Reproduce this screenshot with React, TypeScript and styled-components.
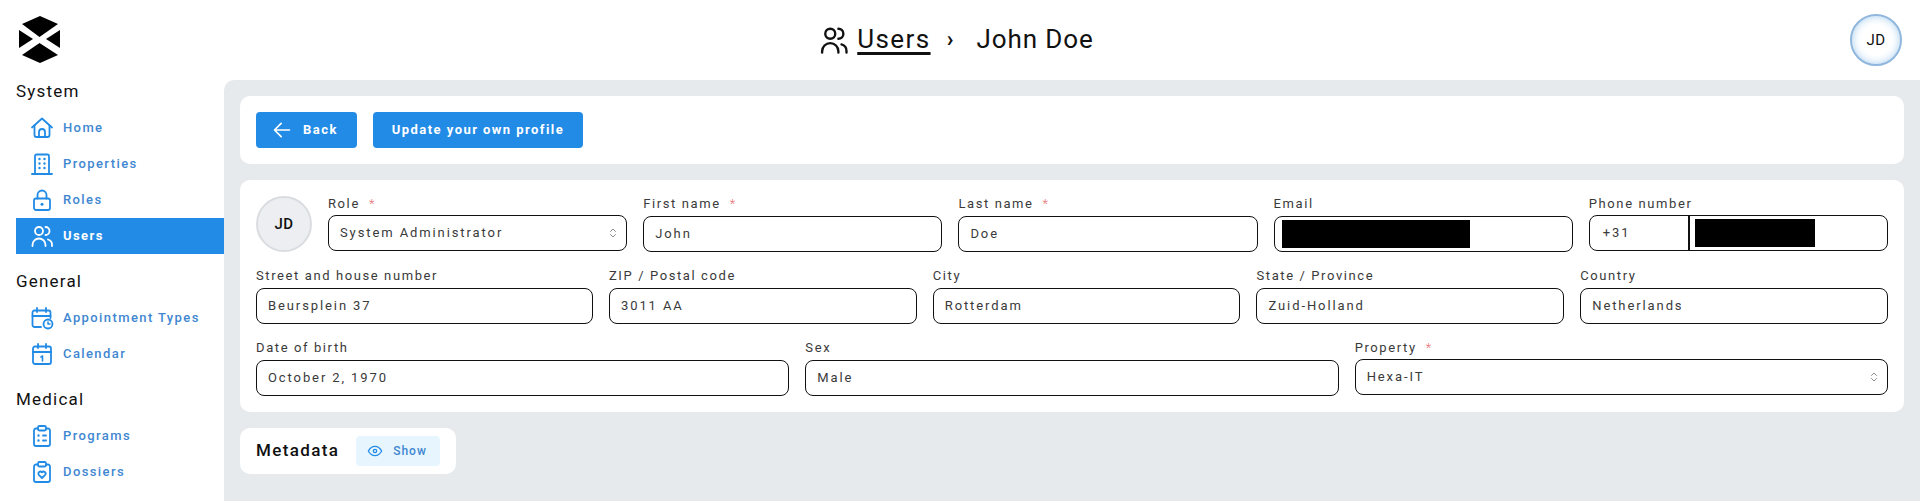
import React from "react";
import styled, { createGlobalStyle } from "styled-components";

const GlobalStyle = createGlobalStyle`
  html, body {
    margin: 0;
    height: 100%;
    background: #fff;
    overflow: hidden;
  }
  body {
    font-family: "Roboto", "Liberation Sans", sans-serif;
    color: #111;
  }
`;

const StyledPage = styled.div`
  width: 1920px;
  height: 501px;
  display: flex;
  flex-direction: column;
`;
const StyledHeader = styled.header`
  height: 80px;
  flex: none;
  display: grid;
  grid-template-columns: 1fr auto 1fr;
  align-items: center;
  padding: 0 18px 0 19px;
`;
const StyledLogo = styled.svg`
  width: 42px;
  height: 47px;
  display: block;
  margin-top: -1px;
`;
const StyledTitle = styled.div`
  display: flex;
  align-items: center;
  margin-left: -8px;
  font-size: 26px;
  letter-spacing: 0.9px;
`;
const StyledTitleIcon = styled.svg`
  width: 30px;
  height: 30px;
  margin-right: 8px;
`;
const StyledTitleText = styled.span`
  margin-top: -2px;
`;
const StyledTitleLink = styled(StyledTitleText)`
  letter-spacing: 1.4px;
  text-decoration: underline;
  text-decoration-thickness: 2.5px;
  text-underline-offset: 4px;
`;
const StyledTitleSeparator = styled.span`
  width: 48px;
  padding-right: 4px;
  box-sizing: border-box;
  text-align: center;
  font-size: 22px;
  font-weight: 700;
  margin: -3px 0 0 -2px;
`;
const StyledUserButton = styled.div`
  justify-self: end;
  width: 52px;
  height: 52px;
  box-sizing: border-box;
  border-radius: 50%;
  border: 2px solid #8fb6dc;
  box-shadow: inset 0 0 8px #a9cff0;
  display: grid;
  place-items: center;
  font-size: 15px;
  letter-spacing: 0.4px;
`;
const StyledBody = styled.div`
  flex: 1;
  min-height: 0;
  display: flex;
`;
const StyledSidebar = styled.nav`
  width: 224px;
  flex: none;
  box-sizing: border-box;
  padding-left: 16px;
`;
const StyledGroupTitle = styled.div`
  height: 24px;
  line-height: 23px;
  margin: 16px 0 6px;
  font-size: 17px;
  letter-spacing: 1.2px;
  &:first-child {
    margin-top: 0;
  }
`;
const StyledNavItem = styled.div<{ $active?: boolean }>`
  height: 36px;
  display: flex;
  align-items: center;
  gap: 9px;
  padding-left: 14px;
  font-size: 13px;
  font-weight: ${(p) => (p.$active ? 700 : 500)};
  letter-spacing: 1.4px;
  color: ${(p) => (p.$active ? "#fff" : "#3f87d1")};
  background: ${(p) => (p.$active ? "#228be6" : "transparent")};
  svg {
    width: 24px;
    height: 24px;
    color: ${(p) => (p.$active ? "#fff" : "#228be6")};
  }
`;
const StyledNavLabel = styled.span`
  margin-top: -2px;
`;
const StyledMain = styled.main`
  flex: 1;
  min-width: 0;
  box-sizing: border-box;
  background: #e7eaed;
  border-top-left-radius: 10px;
  padding: 16px;
  display: flex;
  flex-direction: column;
  align-items: flex-start;
  gap: 16px;
`;
const StyledCard = styled.section`
  align-self: stretch;
  background: #fff;
  border-radius: 10px;
  padding: 16px;
`;
const StyledActions = styled.div`
  display: flex;
  gap: 16px;
`;
const StyledButton = styled.button<{ $hasIcon?: boolean }>`
  height: 36px;
  border: none;
  border-radius: 4px;
  background: #228be6;
  color: #fff;
  font-family: inherit;
  font-size: 13px;
  font-weight: 700;
  letter-spacing: 1.45px;
  padding: 0 ${(p) => (p.$hasIcon ? "19px 2px 16px" : "19px 2px")};
  display: flex;
  align-items: center;
  gap: 11px;
  svg {
    width: 20px;
    height: 20px;
    margin-top: 2px;
  }
`;
const StyledForm = styled.div`
  display: flex;
  flex-direction: column;
  gap: 16px;
`;
const StyledRow = styled.div<{ $columns: string }>`
  display: grid;
  grid-template-columns: ${(p) => p.$columns};
  gap: 16px;
`;
const StyledAvatar = styled.div`
  width: 56px;
  height: 56px;
  box-sizing: border-box;
  border-radius: 50%;
  background: #eceef1;
  border: 2px solid #d9dde1;
  display: grid;
  place-items: center;
  font-size: 15px;
  font-weight: 500;
  letter-spacing: 0.4px;
`;
const StyledLabel = styled.div<{ $tight?: boolean }>`
  height: ${(p) => (p.$tight ? 19 : 20)}px;
  line-height: 16px;
  font-size: 13px;
  letter-spacing: 1.6px;
  color: #3a3a3a;
`;
const StyledRequired = styled.span`
  color: #e8706f;
  font-weight: 300;
  margin-left: 9px;
`;
const StyledBox = styled.div`
  position: relative;
  height: 36px;
  box-sizing: border-box;
  border: 1.5px solid #111;
  border-radius: 8px;
  display: flex;
  align-items: center;
  padding: 0 11px 2px;
  font-size: 13px;
  letter-spacing: 1.9px;
  color: #3a3a3a;
`;
const StyledChevrons = styled.svg`
  position: absolute;
  right: 7px;
  top: 11px;
  width: 12px;
  height: 12px;
  color: #8b8f94;
`;
const StyledRedaction = styled.div<{ $width: number }>`
  width: ${(p) => p.$width}px;
  height: 28px;
  background: #000;
  margin: 2px 0 0 -4px;
`;
const StyledPhonePrefix = styled.div`
  width: 89px;
  height: calc(100% + 2px);
  flex: none;
  box-sizing: border-box;
  display: flex;
  align-items: center;
  padding: 0 0 2px 2px;
  margin: 0 9px -2px 0;
  border-right: 2px solid #111;
`;
const StyledMetadata = styled.section`
  background: #fff;
  border-radius: 10px;
  padding: 8px 16px;
  display: flex;
  align-items: center;
  gap: 17px;
  font-size: 17px;
  font-weight: 500;
  letter-spacing: 1.35px;
`;
const StyledMetadataTitle = styled.span`
  margin-top: -2px;
`;
const StyledShowButton = styled.button`
  height: 30px;
  width: 84px;
  border: none;
  border-radius: 4px;
  background: #e7f5ff;
  color: #3f87d1;
  font-family: inherit;
  font-size: 12px;
  font-weight: 500;
  letter-spacing: 1px;
  padding: 0 0 1px 11px;
  display: flex;
  align-items: center;
  gap: 10px;
  svg {
    width: 16px;
    height: 16px;
    color: #228be6;
  }
`;

const Icon: React.FC<{ children: React.ReactNode }> = ({ children }) => (
  <svg viewBox="0 0 24 24" fill="none" stroke="currentColor" strokeWidth="1.8" strokeLinecap="round" strokeLinejoin="round">
    {children}
  </svg>
);

const usersPaths = (
  <>
    <circle cx="9" cy="7" r="4" />
    <path d="M2.5 22v-1a6.5 6.5 0 0 1 13 0v1" />
    <path d="M15.5 3a4 4 0 0 1 0 8" />
    <path d="M18 15.5a5.5 5.5 0 0 1 4 5.5v1" />
  </>
);

const navGroups = [
  {
    title: "System",
    items: [
      {
        label: "Home",
        icon: (
          <>
            <path d="M2 11.5 12 2.5l10 9" />
            <path d="M4.5 9.5V19a2 2 0 0 0 2 2h11a2 2 0 0 0 2-2V9.5" />
            <path d="M9 21v-5a3 3 0 0 1 6 0v5" />
          </>
        ),
      },
      {
        label: "Properties",
        icon: (
          <>
            <path d="M2 22h20" />
            <path d="M5 22V4a1.5 1.5 0 0 1 1.5-1.500h11A1.5 1.5 0 0 1 19 4v18" />
            <path d="M9.500 7h.01M14.500 7h.01M9.500 11.500h.01M14.500 11.500h.01M9.500 16h.01M14.500 16h.01" strokeWidth="2.4" />
          </>
        ),
      },
      {
        label: "Roles",
        icon: (
          <>
            <rect x="4" y="10.500" width="16" height="11.500" rx="2" />
            <path d="M7.500 10.500V7a4.500 4.500 0 0 1 9 0v3.500" />
            <path d="M12 16.200h.01" strokeWidth="3" />
          </>
        ),
      },
      { label: "Users", icon: usersPaths, active: true },
    ],
  },
  {
    title: "General",
    items: [
      {
        label: "Appointment Types",
        icon: (
          <>
            <path d="M11 21H4.500a2 2 0 0 1-2-2V6.500a2 2 0 0 1 2-2h14a2 2 0 0 1 2 2V12" />
            <path d="M7 2v4M16 2v4M2.500 10h18" />
            <circle cx="18" cy="18" r="4.500" />
            <path d="M18 16v2h2" strokeWidth="1.5" />
          </>
        ),
      },
      {
        label: "Calendar",
        icon: (
          <>
            <rect x="3" y="4.500" width="18" height="17.500" rx="2" />
            <path d="M8 2v4M16 2v4M3 10h18" />
            <path d="M11 15l1.500-1v5" strokeWidth="1.6" />
          </>
        ),
      },
    ],
  },
  {
    title: "Medical",
    items: [
      {
        label: "Programs",
        icon: (
          <>
            <path d="M8 4.500H6a2 2 0 0 0-2 2V20a2 2 0 0 0 2 2h12a2 2 0 0 0 2-2V6.500a2 2 0 0 0-2-2h-2" />
            <rect x="8" y="2" width="8" height="4.500" rx="1.5" />
            <path d="M8.500 11.500h.01M8.500 16.500h.01" strokeWidth="2.4" />
            <path d="M13 11.500h3M13 16.500h3" />
          </>
        ),
      },
      {
        label: "Dossiers",
        icon: (
          <>
            <path d="M8 4.500H6a2 2 0 0 0-2 2V20a2 2 0 0 0 2 2h12a2 2 0 0 0 2-2V6.500a2 2 0 0 0-2-2h-2" />
            <rect x="8" y="2" width="8" height="4.500" rx="1.5" />
            <path d="M12 18l-3.200-3.200a2 2 0 0 1 3.200-2.400 2 2 0 0 1 3.200 2.400z" />
          </>
        ),
      },
    ],
  },
];

const Chevrons = () => (
  <StyledChevrons viewBox="0 0 12 12" fill="none" stroke="currentColor" strokeWidth="1" strokeLinecap="round" strokeLinejoin="round">
    <path d="M3.500 4.500 6 2l2.500 2.500M3.500 7.500 6 10l2.500-2.500" />
  </StyledChevrons>
);

const Field: React.FC<{
  label: string;
  required?: boolean;
  select?: boolean;
  tight?: boolean;
  children?: React.ReactNode;
}> = ({ label, required, select, tight, children }) => (
  <div>
    <StyledLabel $tight={tight || select}>
      {label}
      {required && <StyledRequired>*</StyledRequired>}
    </StyledLabel>
    <StyledBox>
      {children}
      {select && <Chevrons />}
    </StyledBox>
  </div>
);

export default function App() {
  return (
    <StyledPage>
      <GlobalStyle />
      <StyledHeader>
        <StyledLogo viewBox="0 0 42 47">
          <polygon points="21,0 39,8 20.5,21 3,8" />
          <polygon points="0,14 14,23 0,32" />
          <polygon points="41,14 27,23 41,32" />
          <polygon points="20.5,27 39,39 21,47 3,39" />
        </StyledLogo>
        <StyledTitle>
          <StyledTitleIcon viewBox="0 0 24 24" fill="none" stroke="currentColor" strokeWidth="1.9" strokeLinecap="round" strokeLinejoin="round">
            {usersPaths}
          </StyledTitleIcon>
          <StyledTitleLink>Users</StyledTitleLink>
          <StyledTitleSeparator>›</StyledTitleSeparator>
          <StyledTitleText>John Doe</StyledTitleText>
        </StyledTitle>
        <StyledUserButton>JD</StyledUserButton>
      </StyledHeader>
      <StyledBody>
        <StyledSidebar>
          {navGroups.map((group) => (
            <React.Fragment key={group.title}>
              <StyledGroupTitle>{group.title}</StyledGroupTitle>
              {group.items.map((item) => (
                <StyledNavItem key={item.label} $active={item.active}>
                  <Icon>{item.icon}</Icon>
                  <StyledNavLabel>{item.label}</StyledNavLabel>
                </StyledNavItem>
              ))}
            </React.Fragment>
          ))}
        </StyledSidebar>
        <StyledMain>
          <StyledCard>
            <StyledActions>
              <StyledButton $hasIcon>
                <svg viewBox="0 0 24 24" fill="none" stroke="currentColor" strokeWidth="2" strokeLinecap="round" strokeLinejoin="round">
                  <path d="M21 12H3M11 4l-8 8 8 8" />
                </svg>
                Back
              </StyledButton>
              <StyledButton>Update your own profile</StyledButton>
            </StyledActions>
          </StyledCard>
          <StyledCard>
            <StyledForm>
              <StyledRow $columns="56px repeat(5, 1fr)">
                <StyledAvatar>JD</StyledAvatar>
                <Field label="Role" required select>
                  System Administrator
                </Field>
                <Field label="First name" required>
                  John
                </Field>
                <Field label="Last name" required>
                  Doe
                </Field>
                <Field label="Email">
                  <StyledRedaction $width={188} />
                </Field>
                <Field label="Phone number" tight>
                  <StyledPhonePrefix>+31</StyledPhonePrefix>
                  <StyledRedaction $width={120} />
                </Field>
              </StyledRow>
              <StyledRow $columns="1.095fr repeat(4, 1fr)">
                <Field label="Street and house number">Beursplein 37</Field>
                <Field label="ZIP / Postal code">3011 AA</Field>
                <Field label="City">Rotterdam</Field>
                <Field label="State / Province">Zuid-Holland</Field>
                <Field label="Country">Netherlands</Field>
              </StyledRow>
              <StyledRow $columns="repeat(3, 1fr)">
                <Field label="Date of birth">October 2, 1970</Field>
                <Field label="Sex">Male</Field>
                <Field label="Property" required select>
                  Hexa-IT
                </Field>
              </StyledRow>
            </StyledForm>
          </StyledCard>
          <StyledMetadata>
            <StyledMetadataTitle>Metadata</StyledMetadataTitle>
            <StyledShowButton>
              <svg viewBox="0 0 24 24" fill="none" stroke="currentColor" strokeWidth="2" strokeLinecap="round" strokeLinejoin="round">
                <path d="M2 12c2.500-4.500 6-7 10-7s7.500 2.500 10 7c-2.500 4.500-6 7-10 7s-7.500-2.500-10-7z" />
                <circle cx="12" cy="12" r="2.500" />
              </svg>
              Show
            </StyledShowButton>
          </StyledMetadata>
        </StyledMain>
      </StyledBody>
    </StyledPage>
  );
}
